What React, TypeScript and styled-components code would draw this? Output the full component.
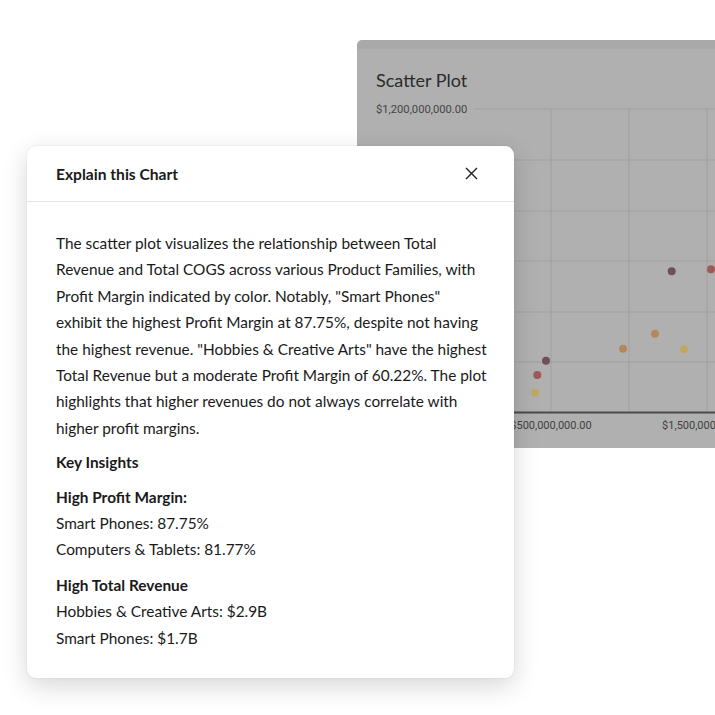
import React from 'react';
import styled, { createGlobalStyle } from 'styled-components';

const Global = createGlobalStyle`
  html, body { margin: 0; padding: 0; background: #ffffff; }
  body { width: 715px; height: 715px; overflow: hidden; }
  * { box-sizing: border-box; }
`;

const Stage = styled.div`
  position: relative;
  width: 715px;
  height: 715px;
  overflow: hidden;
  padding: 40px 0 0 357px;
  background: #ffffff;
`;

const ChartCard = styled.section`
  width: 400px;
  height: 408px;
  background: #b0b0b0;
  border-top: 9px solid #a9a9a9;
  border-radius: 5px 5px 0 0;
  display: flex;
  flex-direction: column;
  overflow: hidden;
`;

const ChartTitle = styled.h2`
  margin: 0;
  padding: 19px 19px 8px;
  font-family: "Lato", "Liberation Sans", sans-serif;
  font-weight: 400;
  font-size: 18px;
  line-height: 24px;
  color: #2b2b2b;
`;

const PlotSvg = styled.svg`
  display: block;
  flex: none;
`;

const Modal = styled.div`
  position: absolute;
  left: 27px;
  top: 146px;
  width: 487px;
  background: #ffffff;
  border-radius: 9px;
  box-shadow: 0 8px 26px rgba(0, 0, 0, 0.16), 0 0 2px rgba(0, 0, 0, 0.1);
  font-family: "Lato", "Liberation Sans", sans-serif;
  color: #1a1a1a;
`;

const ModalHeader = styled.header`
  height: 56px;
  display: flex;
  align-items: center;
  justify-content: space-between;
  padding: 0 36px 0 29px;
  border-bottom: 1px solid #e4e4e4;
`;

const ModalTitle = styled.h3`
  margin: 0;
  font-size: 15.6px;
  font-weight: 700;
  line-height: 20px;
  color: #1a1a1a;
`;

const CloseButton = styled.button`
  display: flex;
  align-items: center;
  justify-content: center;
  width: 13px;
  height: 13px;
  padding: 0;
  border: none;
  background: none;
  cursor: pointer;
`;

const ModalBody = styled.div`
  padding: 28px 29px 27px;
  font-size: 15.4px;
  line-height: 26.4px;
  white-space: nowrap;
`;

const Paragraph = styled.p`
  margin: 0;
`;

const SectionTitle = styled.div<{ $gap: number }>`
  margin-top: ${(p) => p.$gap}px;
  font-weight: 700;
`;

const Line = styled.div``;

type Dot = { x: number; y: number; c: string };

const DOTS: Dot[] = [
  { x: 314.7, y: 171.3, c: '#6e5058' },
  { x: 354, y: 169.3, c: '#a0585a' },
  { x: 298, y: 233.7, c: '#b4875c' },
  { x: 266, y: 248.7, c: '#b4875c' },
  { x: 327, y: 249.3, c: '#bea862' },
  { x: 189, y: 260.7, c: '#6e5058' },
  { x: 180.3, y: 275, c: '#a0585a' },
  { x: 178.3, y: 292.7, c: '#bea862' },
];

const H_LINES = [9, 60, 111, 161, 212, 262];
const V_LINES = [194, 272, 350];

const PARAGRAPH_LINES = [
  'The scatter plot visualizes the relationship between Total',
  'Revenue and Total COGS across various Product Families, with',
  'Profit Margin indicated by color. Notably, "Smart Phones"',
  'exhibit the highest Profit Margin at 87.75%, despite not having',
  'the highest revenue. "Hobbies & Creative Arts" have the highest',
  'Total Revenue but a moderate Profit Margin of 60.22%. The plot',
  'highlights that higher revenues do not always correlate with',
  'higher profit margins.',
];

function ScatterChart() {
  return (
    <PlotSvg width={400} height={348} viewBox="0 0 400 348">
      {H_LINES.map((y) => (
        <line key={y} x1={117} x2={400} y1={y} y2={y} stroke="#a0a0a0" strokeWidth={1} />
      ))}
      {V_LINES.map((x) => (
        <line key={x} x1={x} x2={x} y1={9} y2={312} stroke="#a0a0a0" strokeWidth={1} />
      ))}
      <line x1={117} x2={400} y1={312.5} y2={312.5} stroke="#4a4a4a" strokeWidth={2} />
      <text
        x={19}
        y={9}
        dominantBaseline="central"
        fontFamily="Roboto, 'Liberation Sans', sans-serif"
        fontSize={11.2}
        fill="#454545"
      >
        $1,200,000,000.00
      </text>
      <text
        x={194}
        y={325}
        textAnchor="middle"
        dominantBaseline="central"
        fontFamily="Roboto, 'Liberation Sans', sans-serif"
        fontSize={11}
        fill="#3f3f3f"
      >
        $500,000,000.00
      </text>
      <text
        x={350}
        y={325}
        textAnchor="middle"
        dominantBaseline="central"
        fontFamily="Roboto, 'Liberation Sans', sans-serif"
        fontSize={11}
        fill="#3f3f3f"
      >
        $1,500,000,000.00
      </text>
      {DOTS.map((d, i) => (
        <circle key={i} cx={d.x} cy={d.y} r={4} fill={d.c} />
      ))}
    </PlotSvg>
  );
}

export default function App() {
  return (
    <>
      <Global />
      <Stage>
        <ChartCard>
          <ChartTitle>Scatter Plot</ChartTitle>
          <ScatterChart />
        </ChartCard>
        <Modal role="dialog" aria-label="Explain this Chart">
          <ModalHeader>
            <ModalTitle>Explain this Chart</ModalTitle>
            <CloseButton aria-label="Close">
              <svg width="13" height="13" viewBox="0 0 13 13">
                <path d="M1 1 L12 12 M12 1 L1 12" stroke="#1f1f1f" strokeWidth="1.4" fill="none" />
              </svg>
            </CloseButton>
          </ModalHeader>
          <ModalBody>
            <Paragraph>
              {PARAGRAPH_LINES.map((l, i) => (
                <Line key={i}>{l}</Line>
              ))}
            </Paragraph>
            <SectionTitle $gap={8}>Key Insights</SectionTitle>
            <SectionTitle $gap={8}>High Profit Margin:</SectionTitle>
            <Line>Smart Phones: 87.75%</Line>
            <Line>Computers &amp; Tablets: 81.77%</Line>
            <SectionTitle $gap={9}>High Total Revenue</SectionTitle>
            <Line>Hobbies &amp; Creative Arts: $2.9B</Line>
            <Line>Smart Phones: $1.7B</Line>
          </ModalBody>
        </Modal>
      </Stage>
    </>
  );
}
